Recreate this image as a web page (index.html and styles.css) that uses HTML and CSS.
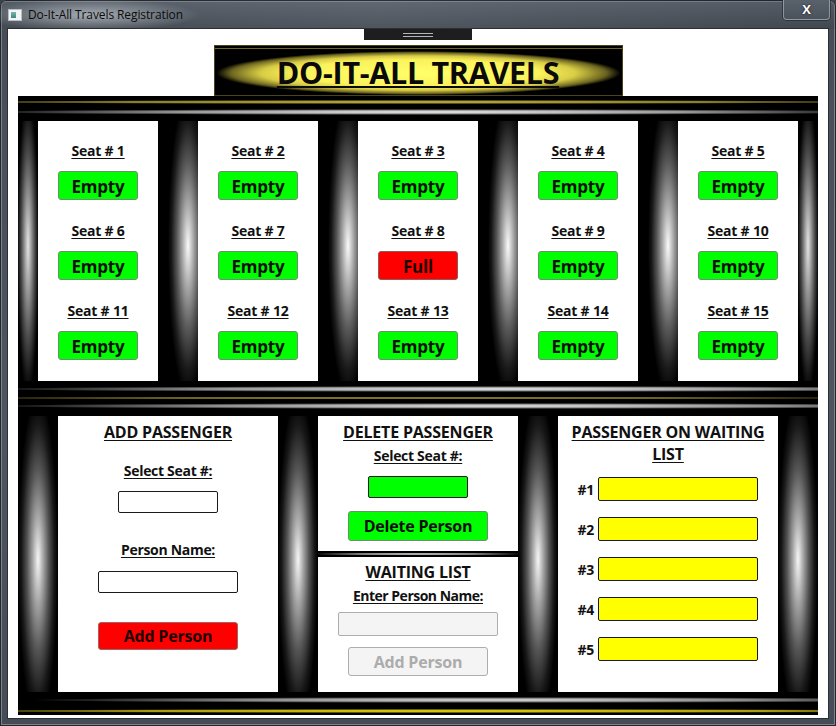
FILE: index.html
```html
<!DOCTYPE html>
<html lang="en">
<head>
<meta charset="utf-8">
<title>Do-It-All Travels Registration</title>
<link rel="stylesheet" href="styles.css">
</head>
<body>
<div class="window">
  <div class="titlebar">
    <span class="app-icon"><span class="app-icon-pane"></span></span>
    <span class="title">Do-It-All Travels Registration</span>
    <span class="close">X</span>
  </div>
  <div class="client">
    <div class="grip"><span class="grip-lines"></span></div>
    <div class="header"><h1 class="brand">DO-IT-ALL TRAVELS</h1></div>
    <div class="board">
      <div class="band band-top"></div>
      <div class="seats">
        <div class="card">
          <div class="seat"><span class="seat-label">Seat # 1</span><button class="seat-btn empty">Empty</button></div>
          <div class="seat"><span class="seat-label">Seat # 6</span><button class="seat-btn empty">Empty</button></div>
          <div class="seat"><span class="seat-label">Seat # 11</span><button class="seat-btn empty">Empty</button></div>
        </div>
        <div class="card">
          <div class="seat"><span class="seat-label">Seat # 2</span><button class="seat-btn empty">Empty</button></div>
          <div class="seat"><span class="seat-label">Seat # 7</span><button class="seat-btn empty">Empty</button></div>
          <div class="seat"><span class="seat-label">Seat # 12</span><button class="seat-btn empty">Empty</button></div>
        </div>
        <div class="card">
          <div class="seat"><span class="seat-label">Seat # 3</span><button class="seat-btn empty">Empty</button></div>
          <div class="seat"><span class="seat-label">Seat # 8</span><button class="seat-btn full">Full</button></div>
          <div class="seat"><span class="seat-label">Seat # 13</span><button class="seat-btn empty">Empty</button></div>
        </div>
        <div class="card">
          <div class="seat"><span class="seat-label">Seat # 4</span><button class="seat-btn empty">Empty</button></div>
          <div class="seat"><span class="seat-label">Seat # 9</span><button class="seat-btn empty">Empty</button></div>
          <div class="seat"><span class="seat-label">Seat # 14</span><button class="seat-btn empty">Empty</button></div>
        </div>
        <div class="card">
          <div class="seat"><span class="seat-label">Seat # 5</span><button class="seat-btn empty">Empty</button></div>
          <div class="seat"><span class="seat-label">Seat # 10</span><button class="seat-btn empty">Empty</button></div>
          <div class="seat"><span class="seat-label">Seat # 15</span><button class="seat-btn empty">Empty</button></div>
        </div>
      </div>
      <div class="band band-mid"></div>
      <div class="panels">
        <div class="panel add-panel">
          <h2 class="panel-title">ADD PASSENGER</h2>
          <span class="field-label add-seat-label">Select Seat #:</span>
          <input class="field add-seat" type="text">
          <span class="field-label add-name-label">Person Name:</span>
          <input class="field add-name" type="text">
          <button class="action red-btn">Add Person</button>
        </div>
        <div class="middle-col">
          <div class="panel delete-panel">
            <h2 class="panel-title">DELETE PASSENGER</h2>
            <span class="field-label del-label">Select Seat #:</span>
            <div class="field green-field"></div>
            <button class="action green-btn">Delete Person</button>
          </div>
          <div class="divider"></div>
          <div class="panel wait-panel">
            <h2 class="panel-title wait-title">WAITING LIST</h2>
            <span class="field-label wait-label">Enter Person Name:</span>
            <input class="field disabled-field" type="text" disabled>
            <button class="action disabled-btn" disabled>Add Person</button>
          </div>
        </div>
        <div class="panel list-panel">
          <h2 class="panel-title list-title">PASSENGER ON WAITING LIST</h2>
          <div class="wait-rows">
            <div class="wait-row"><span class="wait-num">#1</span><div class="yellow-box"></div></div>
            <div class="wait-row"><span class="wait-num">#2</span><div class="yellow-box"></div></div>
            <div class="wait-row"><span class="wait-num">#3</span><div class="yellow-box"></div></div>
            <div class="wait-row"><span class="wait-num">#4</span><div class="yellow-box"></div></div>
            <div class="wait-row"><span class="wait-num">#5</span><div class="yellow-box"></div></div>
          </div>
        </div>
      </div>
      <div class="band band-bottom"></div>
    </div>
  </div>
</div>
</body>
</html>
```
FILE: styles.css
```css
* { box-sizing: border-box; margin: 0; padding: 0; }

html, body {
  width: 836px;
  height: 726px;
  overflow: hidden;
  background: #3e454e;
  font-family: "Open Sans", "Noto Sans", sans-serif;
}

.window {
  width: 836px;
  height: 726px;
  display: flex;
  flex-direction: column;
  padding-bottom: 8px;
  background: linear-gradient(to bottom, #5b636d 0px, #474e57 28px, #4d555e 60%, #454c55 100%);
  box-shadow: inset 0 0 0 1px #23282e, inset 0 0 0 2px #7a828b;
  border-radius: 6px 6px 0 0;
}

.titlebar {
  height: 29px;
  display: flex;
  align-items: flex-start;
  padding-left: 8px;
  padding-right: 6px;
  background:
    radial-gradient(ellipse 110px 16px at 90px 15px, rgba(235, 240, 245, 0.55), rgba(235, 240, 245, 0) 100%),
    linear-gradient(to right, rgba(0, 0, 0, 0.05), rgba(255, 255, 255, 0.04) 45%, rgba(0, 0, 0, 0.08));
}

.app-icon {
  width: 14px;
  height: 12px;
  margin-top: 9px;
  background: #f2f4f6;
  border: 1px solid #b8bec4;
  display: flex;
  padding: 2px;
}

.app-icon-pane {
  width: 5px;
  height: 100%;
  background: linear-gradient(to bottom, #7ab6b0, #3e8480);
}

.title {
  margin-top: 6px;
  margin-left: 6px;
  font-size: 12px;
  line-height: 17px;
  color: #0c0c0c;
  font-family: "Open Sans", sans-serif;
  letter-spacing: -0.1px;
}

.close {
  margin-left: auto;
  width: 47px;
  height: 20px;
  border: 1px solid rgba(220, 225, 230, 0.45);
  border-top: none;
  border-radius: 0 0 4px 4px;
  background: linear-gradient(to bottom, #59616b, #4a525b);
  box-shadow: 0 0 0 1px rgba(20, 24, 28, 0.5);
  color: #ffffff;
  font-weight: 700;
  font-size: 13px;
  line-height: 19px;
  text-align: center;
  text-shadow: 0 0 2px #000;
}

.client {
  margin: 0 8px;
  height: 689px;
  background: #ffffff;
  padding: 0 10px;
  box-shadow: 0 0 0 1px #2b3036;
}

.grip {
  width: 108px;
  height: 11px;
  margin: 0 auto;
  background: #1e1e1e;
  display: flex;
  align-items: center;
  justify-content: center;
}

.grip-lines {
  width: 30px;
  height: 4px;
  border-top: 1px solid #b5b5b5;
  border-bottom: 1px solid #b5b5b5;
}

.header {
  width: 409px;
  height: 51px;
  margin: 5px auto 0;
  background:
    radial-gradient(ellipse 202px 22px at 50% 55%, #ffff6a 0%, #fbf25c 60%, #d8cc44 78%, #6a6320 93%, rgba(0, 0, 0, 0) 100%),
    #000000;
  box-shadow: inset 0 0 0 1px #4a4418, inset 0 3px 0 0 #000, inset 0 4px 0 0 #6e6528;
  display: flex;
  align-items: center;
  justify-content: center;
}

.brand {
  font-size: 30.5px;
  font-weight: 700;
  color: #0a0a0a;
  text-decoration: underline;
  text-decoration-thickness: 2px;
  text-underline-offset: 2px;
  line-height: 36px;
  margin-top: 2px;
  letter-spacing: -0.3px;
}

.board {
  width: 800px;
  height: 619px;
  margin: 0 auto;
  background: #000000;
  display: flex;
  flex-direction: column;
}

.band {
  flex: none;
}

.band-top {
  height: 25px;
  background:
    radial-gradient(ellipse 520px 2px at 50% 6px, #c9bb4a 0%, #8a7f2c 60%, rgba(0, 0, 0, 0) 100%),
    radial-gradient(ellipse 470px 3px at 52% 16px, #f4f4f4 0%, #9a9a9a 55%, rgba(0, 0, 0, 0) 100%),
    #000000;
}

.band-mid {
  height: 35px;
  background:
    radial-gradient(ellipse 520px 3px at 60% 8px, #f0f0f0 0%, #999999 55%, rgba(0, 0, 0, 0) 100%),
    radial-gradient(ellipse 560px 1px at 50% 17px, #b8a838 0%, #6e6420 65%, rgba(0, 0, 0, 0) 100%),
    radial-gradient(ellipse 520px 3px at 60% 25px, #ebebeb 0%, #939393 55%, rgba(0, 0, 0, 0) 100%),
    #000000;
}

.band-bottom {
  height: 23px;
  background:
    radial-gradient(ellipse 470px 3px at 60% 8px, #e6e6e6 0%, #8a8a8a 55%, rgba(0, 0, 0, 0) 100%),
    radial-gradient(ellipse 560px 2px at 55% 19px, #f2e400 0%, #a89c10 60%, rgba(0, 0, 0, 0) 100%),
    #000000;
}

.seats {
  height: 260px;
  display: flex;
  gap: 40px;
  padding: 0 20px;
  background:
    radial-gradient(11px 150px at 10px 48%, #e4e4e4 0%, #9a9a9a 30%, #4a4a4a 62%, #121212 88%, rgba(0, 0, 0, 0) 100%),
    radial-gradient(20px 150px at 170px 48%, #fafafa 0%, #b0b0b0 25%, #5a5a5a 55%, #1a1a1a 82%, rgba(0, 0, 0, 0) 100%),
    radial-gradient(20px 150px at 330px 48%, #fafafa 0%, #b0b0b0 25%, #5a5a5a 55%, #1a1a1a 82%, rgba(0, 0, 0, 0) 100%),
    radial-gradient(20px 150px at 490px 48%, #fafafa 0%, #b0b0b0 25%, #5a5a5a 55%, #1a1a1a 82%, rgba(0, 0, 0, 0) 100%),
    radial-gradient(20px 150px at 650px 48%, #fafafa 0%, #b0b0b0 25%, #5a5a5a 55%, #1a1a1a 82%, rgba(0, 0, 0, 0) 100%),
    radial-gradient(11px 150px at 790px 48%, #e4e4e4 0%, #9a9a9a 30%, #4a4a4a 62%, #121212 88%, rgba(0, 0, 0, 0) 100%),
    #000000;
  background-repeat: no-repeat;
}

.card {
  width: 120px;
  height: 260px;
  background: #ffffff;
  padding-top: 20px;
  display: grid;
  grid-template-rows: repeat(3, 80px);
}

.seat {
  display: flex;
  flex-direction: column;
  align-items: center;
  gap: 10px;
}

.seat-label {
  font-size: 14px;
  font-weight: 700;
  line-height: 20px;
  color: #111;
  text-decoration: underline;
  text-underline-offset: 2px;
  letter-spacing: -0.2px;
}

.seat-btn {
  width: 80px;
  height: 29px;
  border-radius: 3px;
  font-family: inherit;
  font-size: 17px;
  font-weight: 700;
  line-height: 27px;
  padding-top: 1px;
  color: #0d0d0d;
  letter-spacing: -0.2px;
}

.empty {
  background: #00ff00;
  border: 1px solid #6d8f6d;
}

.full {
  background: #ff0000;
  border: 1px solid #8f5a5a;
  color: #1a0000;
}

.panels {
  height: 276px;
  display: grid;
  grid-template-columns: 220px 200px 220px;
  column-gap: 40px;
  padding: 0 40px;
  background:
    radial-gradient(20px 165px at 20px 52%, #f6f6f6 0%, #aaaaaa 25%, #555555 55%, #181818 82%, rgba(0, 0, 0, 0) 100%),
    radial-gradient(20px 165px at 280px 52%, #f6f6f6 0%, #aaaaaa 25%, #555555 55%, #181818 82%, rgba(0, 0, 0, 0) 100%),
    radial-gradient(20px 165px at 520px 52%, #f6f6f6 0%, #aaaaaa 25%, #555555 55%, #181818 82%, rgba(0, 0, 0, 0) 100%),
    radial-gradient(20px 165px at 780px 52%, #f6f6f6 0%, #aaaaaa 25%, #555555 55%, #181818 82%, rgba(0, 0, 0, 0) 100%),
    #000000;
  background-repeat: no-repeat;
}

.panel {
  background: #ffffff;
  display: flex;
  flex-direction: column;
  align-items: center;
  padding-top: 5px;
}

.panel-title {
  font-size: 16px;
  font-weight: 700;
  line-height: 22px;
  color: #111;
  text-decoration: underline;
  text-underline-offset: 2px;
  text-align: center;
  letter-spacing: -0.2px;
}

.field-label {
  font-size: 14px;
  font-weight: 700;
  line-height: 20px;
  color: #111;
  text-decoration: underline;
  text-underline-offset: 2px;
  letter-spacing: -0.3px;
}

.field {
  display: block;
  height: 22px;
  border: 1px solid #1a1a1a;
  border-radius: 2px;
  background: #ffffff;
  font-family: inherit;
}

.action {
  width: 140px;
  font-family: inherit;
  font-size: 16px;
  font-weight: 700;
  border-radius: 3px;
  letter-spacing: -0.2px;
}

.add-seat-label { margin-top: 18px; }
.add-seat { width: 100px; margin-top: 10px; }
.add-name-label { margin-top: 27px; }
.add-name { width: 140px; margin-top: 11px; }

.red-btn {
  height: 28px;
  margin-top: 29px;
  background: #ff0000;
  border: 1px solid #a06464;
  color: #1c0000;
}

.middle-col {
  display: flex;
  flex-direction: column;
}

.delete-panel { height: 135px; }
.del-label { margin-top: 3px; }

.green-field {
  width: 100px;
  margin-top: 10px;
  background: #00ff00;
}

.green-btn {
  height: 30px;
  margin-top: 13px;
  background: #00ff00;
  border: 1px solid #6d8f6d;
  color: #0d0d0d;
}

.divider {
  height: 6px;
  background: radial-gradient(ellipse 110px 1.5px at 50% 3px, #e0e0e0 0%, #808080 60%, rgba(0, 0, 0, 0) 100%), #000000;
}

.wait-panel {
  height: 135px;
  padding-top: 4px;
}

.wait-label { margin-top: 3px; letter-spacing: -0.5px; }

.disabled-field {
  width: 160px;
  height: 24px;
  margin-top: 6px;
  background: #f4f4f4;
  border: 1px solid #adadad;
}

.disabled-btn {
  height: 29px;
  margin-top: 11px;
  background: #f4f4f4;
  border: 1px solid #adadad;
  color: #acacac;
}

.list-title {
  width: 206px;
}

.wait-rows {
  display: flex;
  flex-direction: column;
  gap: 16px;
  margin-top: 12px;
  align-self: stretch;
}

.wait-row {
  display: flex;
  align-items: center;
  gap: 4px;
  padding-left: 16px;
}

.wait-num {
  width: 20px;
  text-align: right;
  font-size: 14px;
  font-weight: 700;
  color: #111;
  letter-spacing: -0.3px;
}

.yellow-box {
  width: 160px;
  height: 24px;
  background: #ffff00;
  border: 1px solid #1a1a1a;
  border-radius: 2px;
}
```
